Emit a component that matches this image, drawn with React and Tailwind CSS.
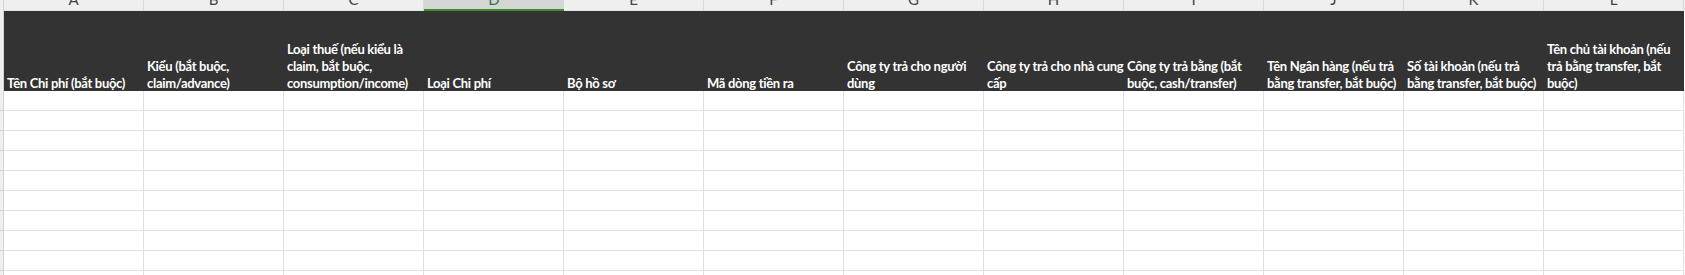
const columns = [
  { letter: "A", lines: ["Tên Chi phí (bắt buộc)"] },
  { letter: "B", lines: ["Kiểu (bắt buộc,", "claim/advance)"] },
  { letter: "C", lines: ["Loại thuế (nếu kiểu là", "claim, bắt buộc,", "consumption/income)"] },
  { letter: "D", lines: ["Loại Chi phí"], selected: true },
  { letter: "E", lines: ["Bộ hồ sơ"] },
  { letter: "F", lines: ["Mã dòng tiền ra"] },
  { letter: "G", lines: ["Công ty trả cho người", "dùng"] },
  { letter: "H", lines: ["Công ty trả cho nhà cung", "cấp"] },
  { letter: "I", lines: ["Công ty trả bằng (bắt", "buộc, cash/transfer)"] },
  { letter: "J", lines: ["Tên Ngân hàng (nếu trả", "bằng transfer, bắt buộc)"] },
  { letter: "K", lines: ["Số tài khoản (nếu trả", "bằng transfer, bắt buộc)"] },
  { letter: "L", lines: ["Tên chủ tài khoản (nếu", "trả bằng transfer, bắt", "buộc)"] },
];

const rows = Array.from({ length: 10 }, (_, i) => i);

export default function App() {
  return (
    <div className="w-[1685px] bg-white overflow-hidden" style={{ fontFamily: "Lato, 'Noto Sans', sans-serif" }}>
      {/* Column letters */}
      <div className="flex h-[11px] bg-[#efefef]">
        <div className="w-[4px] shrink-0 border-r border-[#d4d4d4]" />
        {columns.map((col) => (
          <div
            key={col.letter}
            className={
              col.selected
                ? "w-[140px] shrink-0 overflow-hidden bg-[#d6d6d6] border-b-2 border-[#3e8e2b] text-[#2f7a3a]"
                : "w-[140px] shrink-0 overflow-hidden border-r border-[#dadada] border-b border-b-[#e4e4e4] text-[#444444]"
            }
          >
            <div className="-mt-[8px] text-center text-[15px] leading-[15px]">{col.letter}</div>
          </div>
        ))}
      </div>

      {/* Header row */}
      <div className="flex h-[80px]">
        <div className="w-[4px] shrink-0 bg-[#efefef] border-r border-[#d4d4d4]" />
        {columns.map((col) => (
          <div
            key={col.letter}
            className="w-[140px] shrink-0 bg-[#333333] flex flex-col justify-end pl-[3px] text-white font-bold text-[13px] tracking-[-0.3px] leading-[17px] whitespace-nowrap overflow-hidden"
          >
            <div className="-mb-[1px]">
              {col.lines.map((line) => (
                <div key={line}>{line}</div>
              ))}
            </div>
          </div>
        ))}
      </div>

      {/* Empty rows */}
      {rows.map((r) => (
        <div key={r} className="flex h-[20px]">
          <div className="w-[4px] shrink-0 bg-[#efefef] border-r border-b border-[#d4d4d4]" />
          {columns.map((col) => (
            <div key={col.letter} className="w-[140px] shrink-0 border-r border-b border-[#e1e1e1]" />
          ))}
        </div>
      ))}
    </div>
  );
}
